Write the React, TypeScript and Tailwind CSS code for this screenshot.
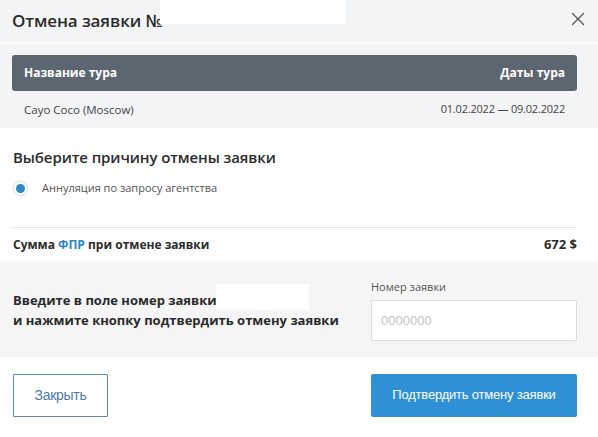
import React from 'react';
import { X } from 'lucide-react';

const sans = "font-['Open_Sans',sans-serif]";
const arial = "font-['Liberation_Sans',Arial,sans-serif]";

const CancelOrderModal: React.FC = () => {
  return (
    <div className={`w-[598px] h-[437px] bg-white ${sans} text-[#333]`}>
      {/* Header */}
      <div className="h-[44px] bg-[#f3f4f6] border-b-2 border-[#fafbfc] flex items-center justify-between pl-[12px] pr-[9px]">
        <div className="relative flex items-center">
          <h1 className="text-[17px] font-semibold text-[#2b2b2b] tracking-[-0.1px]">Отмена заявки №</h1>
          <span className="absolute left-[148px] top-[-8px] w-[186px] h-[24px] bg-white" />
        </div>
        <button className="text-[#555] mt-[-4px]">
          <X className="w-[22px] h-[22px]" strokeWidth={1.3} />
        </button>
      </div>

      {/* Tour table */}
      <div className="bg-[#f3f4f6] pl-[12px] pr-[21px] pt-[11px] h-[84px]">
        <div className="h-[36px] bg-[#5c6670] rounded-[3px] flex items-center justify-between px-[12px] text-white text-[12px] font-bold">
          <span>Название тура</span>
          <span>Даты тура</span>
        </div>
        <div className="h-[37px] flex items-center justify-between px-[12px] text-[11.5px] text-[#444]">
          <span>Cayo Coco (Moscow)</span>
          <span className="text-[11px] tracking-[-0.2px]">01.02.2022 — 09.02.2022</span>
        </div>
      </div>

      {/* Reason */}
      <div className="px-[13px] pr-[21px]">
        <h2 className="mt-[18px] text-[15px] font-semibold text-[#2b2b2b] leading-[22px] tracking-[-0.1px]">
          Выберите причину отмены заявки
        </h2>
        <label className="mt-[12px] flex items-center gap-[14px]">
          <span className="w-[15px] h-[15px] rounded-full border border-[#dde3ea] bg-white shadow-[0_0_2px_rgba(0,0,0,0.12)] flex items-center justify-center">
            <span className="w-[9px] h-[9px] rounded-full bg-[#2a87c9]" />
          </span>
          <span className="text-[11px] text-[#555]">Аннуляция по запросу агентства</span>
        </label>
        <div className="mt-[30px] border-t border-[#e6e6e6] h-[35px] flex items-center justify-between text-[12px] font-bold text-[#2b2b2b] pt-[1px]">
          <span>
            Сумма <span className="text-[#2a87c9]">ФПР</span> при отмене заявки
          </span>
          <span className="text-[13px]">672 $</span>
        </div>
      </div>

      {/* Order number confirm */}
      <div className="h-[95px] bg-[#f5f5f5] px-[13px] pr-[21px] flex items-center justify-between">
        <div className="text-[13px] font-bold text-[#2b2b2b] leading-[20px] pt-[2px]">
          <div className="relative">
            Введите в поле номер заявки
            <span className="absolute left-[203px] top-[-6px] w-[93px] h-[26px] bg-white" />
          </div>
          <div>и нажмите кнопку подтвердить отмену заявки</div>
        </div>
        <div className="w-[206px] pt-[1px]">
          <div className="text-[11px] text-[#555] leading-[16px]">Номер заявки</div>
          <input
            className={`mt-[5px] w-full h-[41px] bg-white border border-[#dcdcdc] rounded-[2px] px-[9px] text-[13px] ${arial} placeholder:text-[#c4c4c4] outline-none`}
            placeholder="0000000"
          />
        </div>
      </div>

      {/* Actions */}
      <div className={`mt-[17px] pl-[13px] pr-[21px] flex justify-between ${arial}`}>
        <button className="w-[95px] h-[43px] border border-[#5c8aa5] rounded-[1px] text-[14px] text-[#4d79a6] tracking-[-0.3px]">
          Закрыть
        </button>
        <button className="w-[206px] h-[43px] bg-[#2f90d6] rounded-[2px] text-[13px] text-white tracking-[-0.2px]">
          Подтвердить отмену заявки
        </button>
      </div>
    </div>
  );
};

export default function App() {
  return <CancelOrderModal />;
}
